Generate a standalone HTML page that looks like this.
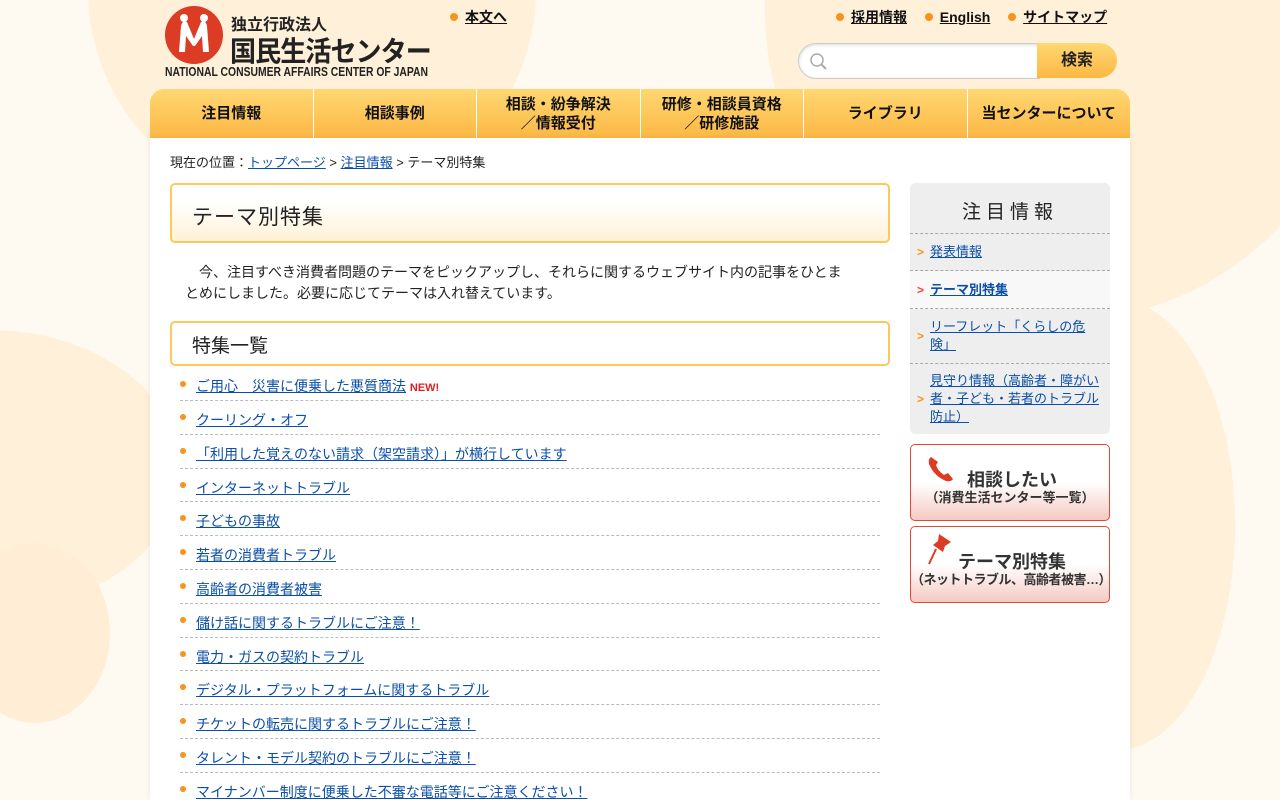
<!DOCTYPE html>
<html><head><meta charset="utf-8"><style>
*{margin:0;padding:0;box-sizing:border-box}
html,body{width:1280px;height:800px;overflow:hidden}
body{background:#fffaf1;font-family:"Liberation Sans","Noto Sans CJK JP",sans-serif;position:relative;color:#222}
.c{position:absolute;border-radius:50%;background:#fff0da}
a{color:#0b4fa8;text-decoration:underline}
.top a{color:#111;font-weight:bold;font-size:14px}
.dot{display:inline-block;width:8px;height:8px;border-radius:50%;background:#f7931e;margin-right:7px;vertical-align:1px}
.nav{position:absolute;left:150px;top:89px;width:980px;height:49px;display:flex;border-radius:14px 14px 0 0;overflow:hidden;background:linear-gradient(#ffd772,#fcb844)}
.nav div{flex:1;border-left:1px solid #fff;display:flex;align-items:center;justify-content:center;text-align:center;font-weight:bold;font-size:15px;line-height:19px;color:#111}
.nav div:first-child{border-left:none}
.main{position:absolute;left:150px;top:138px;width:980px;height:662px;background:#fff;box-shadow:0 0 6px rgba(0,0,0,.08)}
.h1{position:absolute;left:20px;top:45px;width:720px;height:60px;border:2px solid #fcc95a;border-radius:5px;background:linear-gradient(#fff 30%,#fff1d6);font-size:21px;padding:16px 20px;letter-spacing:1px}
.h2{position:absolute;left:20px;top:183px;width:720px;height:45px;border:2px solid #fcc95a;border-radius:5px;font-size:19px;padding:8px 20px}
.lead{position:absolute;left:35px;top:124px;width:662px;font-size:14px;line-height:21px;text-indent:14px}
ul{position:absolute;left:30px;top:235px;width:700px;list-style:none}
li{height:33.8px;border-bottom:1px dashed #bbb;font-size:14px;padding:9px 0 0 16px;position:relative}
li:before{content:"";position:absolute;left:0;top:13px;width:6px;height:6px;border-radius:50%;background:#f7931e}
li:first-child{height:28px;padding-top:3px}
li:first-child:before{top:8px}
li:last-child{border:none}
.side{position:absolute;left:910px;top:183px;width:200px;height:251px;background:#eee;border-radius:5px}
.side .t{height:51px;text-align:center;font-size:19px;letter-spacing:5px;padding-top:14px;border-bottom:1px dashed #aaa}
.side .i{border-bottom:1px dashed #aaa;font-size:13px;line-height:18px;padding:0 6px 0 20px;position:relative;display:flex;align-items:center}
.side .i:before{content:">";position:absolute;left:7px;color:#f7931e;font-size:12px;font-weight:bold}
.side .i.on{background:#f8f8f8}
.side .i.on:before{color:#e43}
.bn{position:absolute;left:910px;width:200px;height:77px;border:1px solid #e04a35;border-radius:5px;background:linear-gradient(#fff 50%,#f5c9c2);text-align:center;font-weight:bold;color:#333}
</style></head><body>
<div class="c" style="left:88px;top:-230px;width:448px;height:440px"></div>
<div class="c" style="left:765px;top:-300px;width:600px;height:620px"></div>
<div class="c" style="left:-200px;top:330px;width:380px;height:280px"></div>
<div class="c" style="left:-40px;top:543px;width:150px;height:180px;background:#ffeed5"></div>
<div class="c" style="left:1000px;top:300px;width:235px;height:450px"></div>

<svg style="position:absolute;left:165px;top:6px" width="58" height="58"><circle cx="29" cy="29" r="29" fill="#dc3b24"/><path d="M14 46 L16 20 Q17 14 22 16 L29 33 L36 16 Q41 14 42 20 L44 46 L38 46 L37 30 L30 40 L28 40 L21 30 L20 46Z" fill="#fff"/><circle cx="19" cy="12" r="4" fill="#fff"/><circle cx="39" cy="12" r="4" fill="#fff"/></svg>
<div style="position:absolute;left:231px;top:11px;font-size:16px;font-weight:bold;color:#222">独立行政法人</div>
<div style="position:absolute;left:230px;top:30px;font-size:28px;font-weight:bold;color:#222;letter-spacing:-1px;transform:scaleX(.93);transform-origin:left">国民生活センター</div>
<div style="position:absolute;left:165px;top:65px;font-size:12.5px;font-weight:bold;color:#222;transform:scaleX(.83);transform-origin:left">NATIONAL CONSUMER AFFAIRS CENTER OF JAPAN</div>

<div class="top" style="position:absolute;left:450px;top:7px"><span class="dot"></span><a>本文へ</a></div>
<div class="top" style="position:absolute;left:836px;top:7px"><span class="dot"></span><a>採用情報</a>&nbsp;&nbsp;&nbsp;&nbsp;<span class="dot"></span><a>English</a>&nbsp;&nbsp;&nbsp;&nbsp;<span class="dot"></span><a>サイトマップ</a></div>
<div style="position:absolute;left:798px;top:43px;width:242px;height:36px;background:#fff;border:1px solid #ccc;border-radius:18px 0 0 18px;box-shadow:inset 0 1px 3px rgba(0,0,0,.15)">
<svg style="position:absolute;left:10px;top:8px" width="20" height="20"><circle cx="8" cy="8" r="6" fill="none" stroke="#aaa" stroke-width="1.5"/><path d="M12 12L17 17" stroke="#aaa" stroke-width="2"/></svg></div>
<div style="position:absolute;left:1037px;top:43px;width:80px;height:35px;border-radius:0 18px 18px 0;background:linear-gradient(#ffd772,#fcb844);font-weight:bold;font-size:16px;text-align:center;line-height:35px">検索</div>

<div class="nav"><div>注目情報</div><div>相談事例</div><div>相談・紛争解決<br>／情報受付</div><div>研修・相談員資格<br>／研修施設</div><div>ライブラリ</div><div>当センターについて</div></div>

<div class="main">
<div style="position:absolute;left:20px;top:14px;font-size:13px">現在の位置：<a>トップページ</a> &gt; <a>注目情報</a> &gt; テーマ別特集</div>
<div class="h1">テーマ別特集</div>
<div class="lead">今、注目すべき消費者問題のテーマをピックアップし、それらに関するウェブサイト内の記事をひとまとめにしました。必要に応じてテーマは入れ替えています。</div>
<div class="h2">特集一覧</div>
<ul>
<li><a>ご用心　災害に便乗した悪質商法</a> <b style="color:#e02020;font-size:11px">NEW!</b></li>
<li><a>クーリング・オフ</a></li>
<li><a>「利用した覚えのない請求（架空請求）」が横行しています</a></li>
<li><a>インターネットトラブル</a></li>
<li><a>子どもの事故</a></li>
<li><a>若者の消費者トラブル</a></li>
<li><a>高齢者の消費者被害</a></li>
<li><a>儲け話に関するトラブルにご注意！</a></li>
<li><a>電力・ガスの契約トラブル</a></li>
<li><a>デジタル・プラットフォームに関するトラブル</a></li>
<li><a>チケットの転売に関するトラブルにご注意！</a></li>
<li><a>タレント・モデル契約のトラブルにご注意！</a></li>
<li><a>マイナンバー制度に便乗した不審な電話等にご注意ください！</a></li>
</ul>
</div>

<div class="side">
<div class="t">注目情報</div>
<div class="i" style="height:37px"><a>発表情報</a></div>
<div class="i on" style="height:38px"><a><b>テーマ別特集</b></a></div>
<div class="i" style="height:55px"><a>リーフレット「くらしの危険」</a></div>
<div class="i" style="height:70px;border:none"><a>見守り情報（高齢者・障がい者・子ども・若者のトラブル防止）</a></div>
</div>
<div class="bn" style="top:444px">
<svg style="position:absolute;left:15px;top:9px" width="30" height="30"><path d="M5 3 Q2 5 3 10 Q8 22 20 27 Q25 28 27 25 L22 19 L18 21 Q12 17 10 11 L12 8Z" fill="#dc3b24"/></svg>
<div style="position:absolute;left:56px;top:21px;font-size:18px">相談したい</div>
<div style="position:absolute;left:0;width:100%;top:42px;font-size:13px">（消費生活センター等一覧）</div></div>
<div class="bn" style="top:526px">
<svg style="position:absolute;left:14px;top:5px" width="30" height="34"><path d="M14 2 L26 10 L20 14 L18 20 L8 13 L13 9Z" fill="#dc3b24"/><path d="M11 17 L4 32" stroke="#dc3b24" stroke-width="2"/></svg>
<div style="position:absolute;left:47px;top:21px;font-size:18px">テーマ別特集</div>
<div style="position:absolute;left:0;width:100%;top:42px;font-size:13px;letter-spacing:-.5px">（ネットトラブル、高齢者被害…）</div></div>
</body></html>
